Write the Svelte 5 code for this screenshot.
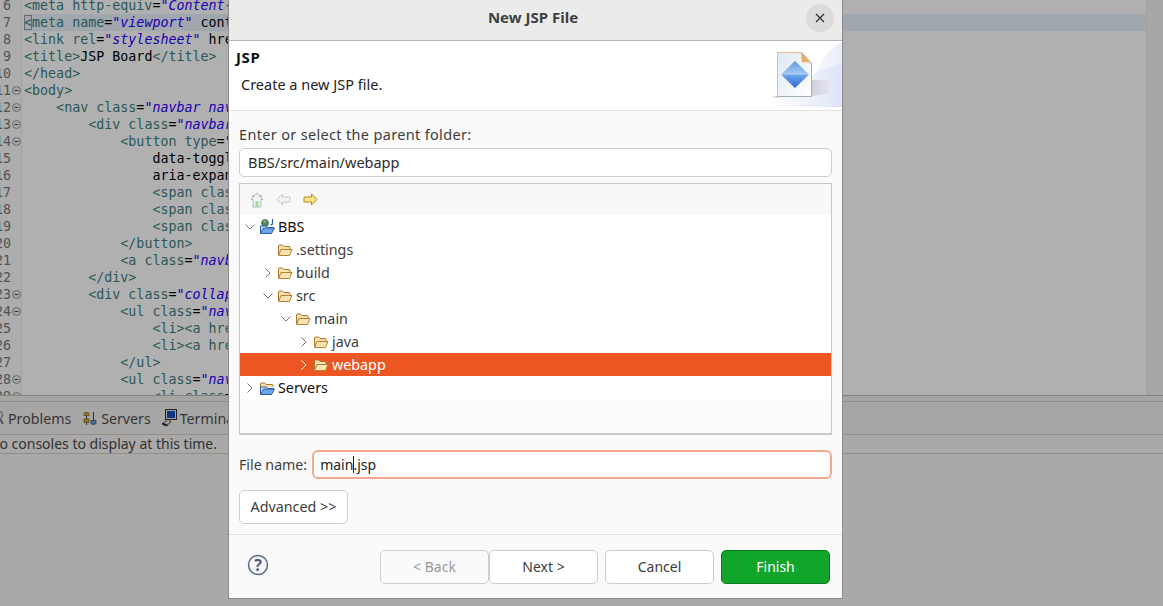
<script lang="ts">
  const source = [
    '<meta http-equiv="Content-Type" content="text/html; charset=UTF-8">',
    '<meta name="viewport" content="width=device-width, initial-scale=1">',
    '<link rel="stylesheet" href="css/bootstrap.css">',
    '<title>JSP Board</title>',
    '</head>',
    '<body>',
    '    <nav class="navbar navbar-default">',
    '        <div class="navbar-header">',
    '            <button type="button" class="navbar-toggle collapsed"',
    '                data-toggle="collapse"',
    '                aria-expanded="false">',
    '                <span class="icon-bar"></span>',
    '                <span class="icon-bar"></span>',
    '                <span class="icon-bar"></span>',
    '            </button>',
    '            <a class="navbar-brand" href="main.jsp">JSP</a>',
    '        </div>',
    '        <div class="collapse navbar-collapse">',
    '            <ul class="nav navbar-nav">',
    '                <li><a href="main.jsp">Main</a></li>',
    '                <li><a href="bbs.jsp">Board</a></li>',
    '            </ul>',
    '            <ul class="nav navbar-nav navbar-right">',
    '                <li class="dropdown">'
  ];
  const folds = [11, 12, 13, 14, 23, 24, 28, 29];

  const tokenRe = /(<\/?|\/?>)|("[^"]*")|([\w-]+(?==))|(=)|([^<>"=]+)/g;

  function tokenize(line: string) {
    const out: { cls: string; text: string }[] = [];
    let insideTag = false;
    for (const m of line.matchAll(tokenRe)) {
      if (m[1]) {
        insideTag = m[1].startsWith('<');
        out.push({ cls: 'tag', text: m[1] });
      } else if (m[2]) {
        out.push({ cls: 'str', text: m[2] });
      } else if (m[3]) {
        out.push({ cls: 'attr', text: m[3] });
      } else if (m[4]) {
        out.push({ cls: 'txt', text: m[4] });
      } else if (insideTag && out.at(-1)?.text.startsWith('<')) {
        out.push({ cls: 'tag', text: m[5] });
      } else {
        out.push({ cls: 'txt', text: m[5] });
      }
    }
    return out;
  }

  const rows = source.map((text, i) => ({ n: i + 6, tokens: tokenize(text) }));

  const tree = [
    { name: 'BBS', depth: 0, open: true, kind: 'project' },
    { name: '.settings', depth: 1, kind: 'folder' },
    { name: 'build', depth: 1, open: false, kind: 'folder' },
    { name: 'src', depth: 1, open: true, kind: 'folder' },
    { name: 'main', depth: 2, open: true, kind: 'folder' },
    { name: 'java', depth: 3, open: false, kind: 'folder' },
    { name: 'webapp', depth: 3, open: false, kind: 'folder', selected: true },
    { name: 'Servers', depth: 0, open: false, kind: 'project-plain' }
  ];
</script>

<div class="screen">
  <div class="editor">
    <div class="code-area">
      {#each rows as row}
        <div class="row" class:current={row.n === 7}>
          <div class="num"><span>{row.n}</span></div>
          <div class="fold">
            {#if folds.includes(row.n)}
              <svg width="9" height="9" viewBox="0 0 9 9">
                <circle cx="4.5" cy="4.5" r="4" fill="#eee" stroke="#9a9a9a" />
                <path d="M2.5 4.5h4" stroke="#555" />
              </svg>
            {/if}
          </div>
          <div class="code">{#each row.tokens as t}<span class={t.cls}>{t.text}</span>{/each}</div>
        </div>
      {/each}
    </div>
    <div class="ruler"></div>
  </div>

  <div class="panel">
    <div class="sash"></div>
    <div class="tabs">
      <svg class="tab-icon problems" width="14" height="16" viewBox="0 0 14 16">
        <circle cx="8" cy="5" r="4.5" fill="#e6e6e6" stroke="#777" />
        <path d="M10 9l3 5" stroke="#777" stroke-width="2" />
      </svg>
      <span class="tab-label">Problems</span>
      <svg class="tab-icon" width="14" height="15" viewBox="0 0 14 15">
        <path d="M3.5 1v13M10.5 1v13" stroke="#444" />
        <rect x="1" y="8" width="5" height="3.5" fill="#d9a92e" stroke="#6b5a1e" stroke-width=".7" />
        <rect x="8" y="9.5" width="5" height="3.5" fill="#67a3d9" stroke="#2f5a86" stroke-width=".7" />
        <rect x="1" y="2" width="5" height="2.5" fill="#e8c34b" stroke="#6b5a1e" stroke-width=".7" />
      </svg>
      <span class="tab-label servers">Servers</span>
      <svg class="tab-icon" width="16" height="18" viewBox="0 0 16 18">
        <rect x="4.5" y="0.5" width="11" height="10" fill="#e6e6e6" stroke="#333" />
        <rect x="6" y="2" width="8" height="7" fill="#1550c8" />
        <path d="M1 15l6-5 3 3-5 4z" fill="#ddd" stroke="#333" stroke-width=".8" />
        <path d="M1.5 14.5l5 2" stroke="#222" stroke-width="1.5" />
      </svg>
      <span class="tab-label terminal">Terminal</span>
    </div>
    <div class="console-row">
      <div class="console-msg"><span>No consoles to display at this time.</span></div>
    </div>
  </div>

  <div class="overlay"></div>

  <div class="dialog">
    <header class="title-bar">
      <span class="title">New JSP File</span>
      <button class="close" aria-label="Close">
        <svg width="10" height="10" viewBox="0 0 10 10">
          <path d="M1 1l8 8M9 1l-8 8" stroke="#333" stroke-width="1.3" />
        </svg>
      </button>
    </header>

    <section class="banner">
      <div class="banner-text">
        <div class="banner-title">JSP</div>
        <div class="banner-desc">Create a new JSP file.</div>
      </div>
      <svg class="banner-art" width="71" height="66" viewBox="0 0 71 66">
        <defs>
          <linearGradient id="wash" x1="0" y1="0" x2="1" y2="0">
            <stop offset="0" stop-color="#ffffff" />
            <stop offset="1" stop-color="#dde4f6" />
          </linearGradient>
          <linearGradient id="wash2" x1="0" y1="0" x2="1" y2="0">
            <stop offset="0" stop-color="#f9fafd" />
            <stop offset="1" stop-color="#eaeef9" />
          </linearGradient>
          <linearGradient id="page" x1="0" y1="0" x2="1" y2="1">
            <stop offset="0" stop-color="#dfe8f3" />
            <stop offset="1" stop-color="#ffffff" />
          </linearGradient>
          <linearGradient id="gemTop" x1="0" y1="0" x2="0" y2="1">
            <stop offset="0" stop-color="#5c97e6" />
            <stop offset="1" stop-color="#a9cdf4" />
          </linearGradient>
          <linearGradient id="gemBottom" x1="0" y1="0" x2="0" y2="1">
            <stop offset="0" stop-color="#6fa4ea" />
            <stop offset="1" stop-color="#2f6fd6" />
          </linearGradient>
          <linearGradient id="shade" x1="0" y1="0" x2="1" y2="0">
            <stop offset="0" stop-color="#d3cfdb" />
            <stop offset="1" stop-color="#e2e3ee" />
          </linearGradient>
          <linearGradient id="floor" x1="0" y1="0" x2="1" y2="0">
            <stop offset="0" stop-color="#ffffff" />
            <stop offset="1" stop-color="#c6c6ce" />
          </linearGradient>
        </defs>
        <path d="M40 66C38 36 50 12 71 1V66Z" fill="url(#wash2)" />
        <path d="M0 66V60C20 50 40 30 71 22V66Z" fill="url(#wash)" />
        <path d="M41 39h17v13L41 55Z" fill="url(#shade)" />
        <path d="M0 55h7v2H0Z" fill="url(#floor)" />
        <path d="M6.500 11.500H30.500L40.500 22V55.500H6.500Z" fill="url(#page)" stroke="#9db4ae" />
        <path d="M6.500 55V11.500H30.500" fill="none" stroke="#ecbd88" />
        <path d="M30 11L41 24C37 20 33 21 31 22Z" fill="#eeaa5c" />
        <path d="M24 20L38 33.500H10Z" fill="url(#gemTop)" />
        <path d="M10 33.500H38L24 47Z" fill="url(#gemBottom)" />
      </svg>
    </section>

    <section class="body">
      <div class="field-label">Enter or select the parent folder:</div>
      <input class="text-input" value="BBS/src/main/webapp" />

      <div class="tree-box">
        <div class="tree-tools">
          <svg width="14" height="16" viewBox="0 0 14 16">
            <path d="M7 1L1 7.500h2V15h8V7.500h2Z" fill="#eef4ee" stroke="#a9bcc4" />
            <path d="M3 3v2M11 3v2" stroke="#c6a88e" stroke-width="1.500" />
            <rect x="5.500" y="9" width="3" height="6" fill="#a8d6a0" />
          </svg>
          <svg width="15" height="13" viewBox="0 0 15 13">
            <path d="M6.500 1L1 6.500l5.500 5.500V9H14V4H6.500Z" fill="#f3f3f3" stroke="#c6c6c6" />
          </svg>
          <svg width="15" height="13" viewBox="0 0 15 13">
            <path d="M8.500 1L14 6.500 8.500 12V9H1V4h7.500Z" fill="#fbe38a" stroke="#b88a1e" />
          </svg>
        </div>
        <div class="tree">
          {#each tree as item}
            <div class="node" class:selected={item.selected} style="padding-left: {item.depth * 18}px">
              <span class="chevron">
                {#if item.open === true}
                  <svg width="10" height="6" viewBox="0 0 10 6"><path d="M.5.500L5 5 9.500.500" fill="none" stroke="currentColor" /></svg>
                {:else if item.open === false}
                  <svg width="6" height="10" viewBox="0 0 6 10"><path d="M.500.500L5 5 .500 9.500" fill="none" stroke="currentColor" /></svg>
                {/if}
              </span>
              {#if item.kind === 'folder'}
                <svg class="node-icon" width="16" height="14" viewBox="0 0 16 14">
                  <path d="M1.500 12V3q0-1 1-1h3l1.500 1.500h5q1 0 1 1V6" fill="#f7dfae" stroke="#a9752c" />
                  <path d="M1.500 12.500L4 6.500h11L12.500 12.500Z" fill="#f9e3b5" stroke="#b5802f" />
                </svg>
              {:else}
                <svg class="node-icon" width="16" height="18" viewBox="0 0 16 18">
                  {#if item.kind === 'project'}
                    <circle cx="6" cy="5" r="3.500" fill="#3f8f5a" stroke="#2b5e86" stroke-width=".7" />
                    <path d="M4 3.500a2 2 0 0 1 3-.5l-1 2Z" fill="#d9a14a" />
                    <path d="M13.500 1v4.500q0 1.500-2 1" fill="none" stroke="#2c5fa8" stroke-width="1.200" />
                  {:else}
                    <path d="M1.500 8V5q0-1 1-1h3L7 5.500h6q1 0 1 1V8" fill="#f7dfae" stroke="#a9752c" />
                  {/if}
                  <path d="M1.500 15.500V8h6l1 1.500h6V10" fill="#cfe0f5" stroke="#2c5fa8" />
                  <path d="M1.500 15.500L4.500 10H15.500L12.500 15.500Z" fill="#6fa6e4" stroke="#2c5fa8" />
                </svg>
              {/if}
              <span class="node-name" class:strong={item.depth === 0}>{item.name}</span>
            </div>
          {/each}
        </div>
        <div class="tree-rest"></div>
      </div>

      <div class="file-row">
        <span class="file-label">File name:</span>
        <div class="file-input">main<i class="caret"></i>.jsp</div>
      </div>

      <button class="btn advanced">Advanced &gt;&gt;</button>
    </section>

    <footer class="footer">
      <svg class="help" width="22" height="22" viewBox="0 0 22 22">
        <circle cx="11" cy="11" r="9.500" fill="#f6f7f9" stroke="#5a6a86" stroke-width="1.500" />
        <text x="11" y="16.500" text-anchor="middle" class="help-mark">?</text>
      </svg>
      <div class="buttons">
        <button class="btn" disabled>&lt; Back</button>
        <button class="btn next">Next &gt;</button>
        <button class="btn cancel">Cancel</button>
        <button class="btn finish">Finish</button>
      </div>
    </footer>
  </div>
</div>

<style>
  :global(body) {
    margin: 0;
    background: #fff;
  }

  .screen {
    position: relative;
    display: flex;
    flex-direction: column;
    width: 1163px;
    height: 606px;
    overflow: hidden;
    font-family: "Noto Sans", sans-serif;
    font-size: 14px;
    color: #3d3d3d;
  }

  /* editor behind the dialog */
  .editor {
    display: flex;
    height: 395px;
    overflow: hidden;
    background: #fff;
    flex-shrink: 0;
  }

  .code-area {
    flex: 1;
    margin-top: -3px;
    font-family: "DejaVu Sans Mono", monospace;
    font-size: 13.33px;
    background: linear-gradient(to right, #fbfbfb 21px, #ececec 21px, #ececec 22px, #fff 22px);
  }

  .row {
    display: flex;
    height: 17px;
    line-height: 17px;
    white-space: pre;
  }

  .row.current .code {
    background: #e8f2fe;
  }

  .row.current .code > span:first-child {
    outline: 1px solid #9a9a9a;
    outline-offset: -1px;
  }

  .num {
    display: flex;
    justify-content: flex-end;
    width: 11px;
    color: #787878;
    flex-shrink: 0;
  }

  .fold {
    display: flex;
    align-items: center;
    width: 13px;
    padding-left: 1px;
    box-sizing: border-box;
    flex-shrink: 0;
  }

  .code {
    flex: 1;
  }

  .tag { color: #3f7f7f; }
  .attr { color: #7f007f; }
  .str { color: #2a00ff; font-style: italic; }
  .txt { color: #000; }

  .ruler {
    width: 16px;
    background: #f3f2f0;
    border-left: 1px solid #eceae7;
  }

  .panel {
    flex: 1;
    display: flex;
    flex-direction: column;
    background: #f6f5f4;
    font-size: 14.2px;
  }

  .sash {
    height: 5px;
    border-top: 1px solid #bdbdbd;
    border-bottom: 1px solid #d0cecb;
    background: #f0efed;
    flex-shrink: 0;
  }

  .tabs {
    display: flex;
    align-items: center;
    height: 32px;
    border-bottom: 1px solid #d0cecb;
    background: #f2f1ef;
    color: #4f4f4f;
    flex-shrink: 0;
  }

  .tab-icon.problems {
    margin-left: -10px;
  }

  .tab-label {
    margin: 0 12px 0 4px;
    white-space: nowrap;
  }

  .tab-label.servers {
    margin-right: 10px;
  }

  .tab-label.terminal {
    margin-left: 3px;
  }

  .console-row {
    height: 18px;
    border-bottom: 1px solid #d0cecb;
    flex-shrink: 0;
  }

  .console-msg {
    display: flex;
    justify-content: flex-end;
    width: 217px;
    line-height: 18px;
    font-size: 14px;
    color: #4a4a4a;
    white-space: nowrap;
  }

  .overlay {
    position: absolute;
    inset: 0;
    background: rgba(0, 0, 0, 0.31);
  }

  /* dialog */
  .dialog {
    position: absolute;
    left: 228px;
    top: 0;
    display: flex;
    flex-direction: column;
    width: 615px;
    height: 599px;
    box-sizing: border-box;
    border: 1px solid #8c8c8c;
    border-top: none;
    background: #fafafa;
    font-size: 14.5px;
  }

  .title-bar {
    position: relative;
    display: flex;
    align-items: center;
    justify-content: center;
    height: 34px;
    padding: 0 5px 6px 0;
    background: #ebebeb;
    border-bottom: 1px solid #b6b6b6;
    flex-shrink: 0;
  }

  .title {
    font-weight: 700;
    font-size: 15px;
    color: #404040;
  }

  .close {
    position: absolute;
    right: 8px;
    top: 4px;
    display: flex;
    align-items: center;
    justify-content: center;
    width: 28px;
    height: 28px;
    padding: 0;
    border: none;
    border-radius: 50%;
    background: #dcdcdc;
  }

  .banner {
    display: flex;
    justify-content: space-between;
    align-items: flex-start;
    height: 69px;
    background: #fff;
    border-bottom: 1px solid #e0e0e0;
    flex-shrink: 0;
  }

  .banner-text {
    padding: 7px 0 0 7px;
  }

  .banner-title {
    font-weight: 700;
    font-size: 15px;
    letter-spacing: 0.6px;
    line-height: 18px;
    color: #111;
  }

  .banner-desc {
    margin: 9px 0 0 5px;
    line-height: 18px;
    color: #222;
  }

  .banner-art {
    display: block;
  }

  .body {
    display: flex;
    flex-direction: column;
    align-items: flex-start;
    padding: 15px 10px 0;
    flex-shrink: 0;
  }

  .field-label {
    height: 16px;
    line-height: 16px;
    margin-bottom: 6px;
    letter-spacing: 0.33px;
  }

  .text-input {
    width: 100%;
    height: 29px;
    box-sizing: border-box;
    padding: 0 8px 2px;
    border: 1px solid #cdcdcd;
    border-radius: 5px;
    background: #fff;
    font: inherit;
    color: #2d2d2d;
    outline: none;
  }

  .tree-box {
    display: flex;
    flex-direction: column;
    width: 100%;
    height: 252px;
    margin-top: 6px;
    box-sizing: border-box;
    border: 1px solid #c8c8c8;
    border-bottom-width: 2px;
    background: #fbfbfb;
  }

  .tree-tools {
    display: flex;
    align-items: center;
    gap: 12px;
    height: 31px;
    padding-left: 10px;
    background: #f8f8f8;
    flex-shrink: 0;
  }

  .tree {
    background: #fff;
    flex-shrink: 0;
    font-size: 14.3px;
  }

  .node {
    display: flex;
    align-items: center;
    height: 23px;
    box-sizing: border-box;
    color: #555;
  }

  .node.selected {
    background: #eb5622;
    color: #fff;
  }

  .chevron {
    display: flex;
    align-items: center;
    justify-content: center;
    width: 19px;
    flex-shrink: 0;
    color: #777;
  }

  .node-icon {
    flex-shrink: 0;
    margin-right: 3px;
  }

  .node-name {
    color: #3d3d3d;
    white-space: nowrap;
  }

  .node-name.strong {
    color: #111;
  }

  .node.selected .node-name,
  .node.selected .chevron {
    color: #fff;
  }

  .tree-rest {
    flex: 1;
  }

  .file-row {
    display: flex;
    align-items: center;
    gap: 5px;
    width: 100%;
    height: 29px;
    margin-top: 15px;
  }

  .file-label {
    font-size: 14.2px;
    white-space: nowrap;
  }

  .file-input {
    flex: 1;
    display: flex;
    align-items: center;
    height: 29px;
    box-sizing: border-box;
    padding-left: 6px;
    border: 2px solid #f6a88e;
    border-radius: 6px;
    background: #fff;
    font-size: 14px;
    color: #222;
  }

  .caret {
    width: 1px;
    height: 17px;
    background: #222;
    margin-right: -1px;
  }

  .btn {
    width: 109px;
    height: 34px;
    padding: 0 0 2px;
    box-sizing: border-box;
    border: 1px solid #cdcdcd;
    border-radius: 5px;
    background: #fff;
    font: inherit;
    font-size: 14px;
    color: #3d3d3d;
  }

  .btn:disabled {
    color: #9a9a9a;
    background: #fafafa;
  }

  .advanced {
    margin-top: 11px;
    font-size: 14.3px;
  }

  .footer {
    display: flex;
    align-items: center;
    justify-content: space-between;
    margin-top: 10px;
    padding: 15px 12px 0 18px;
    border-top: 1px solid #e0e0e0;
  }

  .help {
    margin-bottom: 4px;
  }

  .help-mark {
    font-family: "Noto Sans", sans-serif;
    font-size: 16px;
    font-weight: 700;
    fill: #4f5d78;
  }

  .buttons {
    display: flex;
    gap: 7px;
  }

  .next {
    margin-left: -7px;
  }

  .finish {
    background: #12a52b;
    border-color: #0d7a20;
    color: #fff;
  }
</style>
